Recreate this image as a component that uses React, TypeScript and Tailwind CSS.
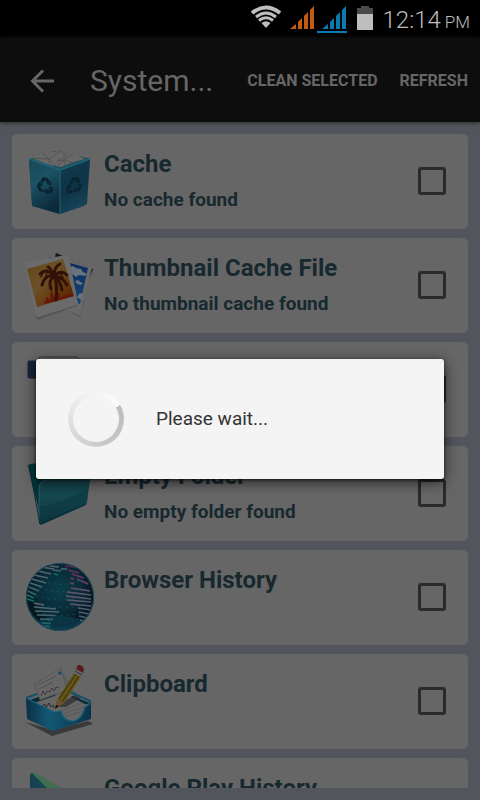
import type { ReactNode } from "react";

const TrashIcon = () => (
  <svg viewBox="0 0 72 72" className="w-full h-full" aria-hidden="true">
    <defs>
      <linearGradient id="binLeft" x1="0" y1="0" x2="0.4" y2="1">
        <stop offset="0" stopColor="#174754" />
        <stop offset="0.45" stopColor="#1c5265" />
        <stop offset="1" stopColor="#0b2b3b" />
      </linearGradient>
      <linearGradient id="binRight" x1="0" y1="0" x2="0.3" y2="1">
        <stop offset="0" stopColor="#113d4c" />
        <stop offset="0.6" stopColor="#0e3346" />
        <stop offset="1" stopColor="#164458" />
      </linearGradient>
      <g id="recycle" fill="none" stroke="#0a2430" strokeWidth="3">
        <path d="M-3.5-2.5-1-6H2L4-2.5" />
        <path d="M5 .5 6.5 3 4.500 6H1" />
        <path d="M-2 6H-5L-6.500 3-4.500 0" />
        <path d="M5.500-5V-1.500L2-2M2 3.500-1 6 2 8M-7 0-4-1.500-2.500 2" strokeWidth="1.200" />
      </g>
    </defs>
    <path d="M5 14 36 25 66 14 63 59 36 69 8 61Z" fill="#153d4b" />
    <path d="M5 14 36 25V69L9 61Q8 60 8 58Z" fill="url(#binLeft)" />
    <path d="M36 25 66 14 62 57Q62 60 60 61L36 69Z" fill="url(#binRight)" />
    <path d="M5 14 30 6 66 13.500 36 25Z" fill="#1a5160" />
    <path d="M8 13 18 8 31 6.500 38 6 42 9 51 9 61 14 50 17 37 22 26 20 20 18Z" fill="#686868" />
    <path d="m18 8 7 6 12-8 4 5-8 5 8-1 9 3M25 14l8 8 7-8 10-5M40 14l1 7M8 13l17 1 1 6" fill="none" stroke="#4c4c4c" strokeWidth="0.700" />
    <path d="M5 14 36 25 66 14" fill="none" stroke="#206477" strokeWidth="1.500" />
    <path d="M36 25V69" stroke="#286273" />
    <use href="#recycle" transform="translate(21 40) skewY(14)" />
    <use href="#recycle" transform="translate(50 40) skewY(-14)" />
  </svg>
);

const PhotosIcon = () => (
  <svg viewBox="0 0 72 72" className="w-full h-full" aria-hidden="true">
    <defs>
      <linearGradient id="sunset" x1="0" y1="0" x2="1" y2="1">
        <stop offset="0" stopColor="#634217" />
        <stop offset="0.4" stopColor="#6b5229" />
        <stop offset="0.7" stopColor="#66350a" />
        <stop offset="1" stopColor="#501b04" />
      </linearGradient>
      <linearGradient id="sky" x1="0" y1="0" x2="0" y2="1">
        <stop offset="0" stopColor="#0a285e" />
        <stop offset="1" stopColor="#1a4671" />
      </linearGradient>
    </defs>
    <path d="M10 66 14 71 42 61 56 68 61 50Z" fill="#000" opacity="0.150" />
    <path d="M31 3 70 20 60 47 30 40Z" fill="#626262" />
    <path d="m32 4 9 4-1 3-9-3ZM66 19l3 1-5 12Z" fill="#151515" />
    <path d="M24 6 68 19 56 66 38 60Z" fill="#6a6a6a" />
    <path d="m25 8 39 11-8 36-24-6Z" fill="url(#sky)" />
    <g fill="#67737d">
      <path d="m46 18 3-1 3 2 5 1 2 3 4 2-2 2-6-1-3 2-4-3-4-2Z" />
      <path d="m51 32 3-1 2 2 3 1-2 2-4-1Z" />
      <path d="m53 48 3-4 3 1-2 6Z" />
    </g>
    <path d="M1 16Q1 14 3 13L42 6Q44 6 45 8L54 54Q54 56 52 57L15 69Q13 69 12 67Z" fill="#6b6b6b" />
    <path d="m13 69 40-12.500" stroke="#505050" />
    <path d="M3 20 39 10 50 47 13 58Z" fill="url(#sunset)" />
    <path d="m20 55 3-7 3 3 1-10 4 8 4-6 2 6 4-3 6-1 3 2Z" fill="#681608" />
    <g fill="none" stroke="#321107" strokeWidth="3" strokeLinecap="round">
      <path d="M30 27Q34 35 32 51M30 27Q22 18 16 25M30 27Q21 25 18 36M30 27Q24 31 27 40M30 27Q30 18 36 15M30 27Q37 20 43 26M30 27Q39 28 43 36M30 27Q35 29 38 41M30 27Q26 18 24 18" />
      <path d="m19 24-2 4m6-5-1 4m14-3 3 5m-19 2-2 5m18-3 2 4" strokeWidth="1.500" />
    </g>
  </svg>
);

const DevicesIcon = () => (
  <svg viewBox="0 0 72 72" className="w-full h-full" aria-hidden="true">
    <rect x="4" y="8" width="16" height="17" rx="1" fill="#17253a" stroke="#1b2738" />
    <path d="M15 30V4H52Q55 4 55 7V30" fill="#686868" stroke="#393939" />
  </svg>
);

const FolderIcon = () => (
  <svg viewBox="0 0 72 72" className="w-full h-full" aria-hidden="true">
    <defs>
      <linearGradient id="folderFront" x1="0" y1="0" x2="0" y2="1">
        <stop offset="0" stopColor="#124247" />
        <stop offset="0.450" stopColor="#154850" />
        <stop offset="1" stopColor="#0d333f" />
      </linearGradient>
      <linearGradient id="folderBack" x1="0" y1="0" x2="0" y2="1">
        <stop offset="0" stopColor="#003d3e" />
        <stop offset="1" stopColor="#062730" />
      </linearGradient>
    </defs>
    <path d="M4 9Q4 7 7 7L32 3 66 8 63 46 18 66Z" fill="url(#folderBack)" />
    <path d="M15 31Q15 25 21 23L67 17 63 44Q63 47 60 49L17 68 15 66Z" fill="url(#folderFront)" />
    <path d="M15 64V31Q15 25 22 23L67 17" fill="none" stroke="#295d64" />
    <path d="M15 50Q40 45 64 32L62 46 17 67Z" fill="#0c3540" opacity="0.500" />
    <path d="m5 9 11 58 46-20" fill="none" stroke="#092a33" />
  </svg>
);

const GlobeIcon = () => (
  <svg viewBox="0 0 72 72" className="w-full h-full" aria-hidden="true">
    <defs>
      <radialGradient id="ocean" cx="0.5" cy="0.4" r="0.6">
        <stop offset="0" stopColor="#0b3e4c" />
        <stop offset="0.550" stopColor="#092b37" />
        <stop offset="0.850" stopColor="#05151d" />
        <stop offset="1" stopColor="#10384a" />
      </radialGradient>
      <linearGradient id="landLeft" x1="0" y1="0" x2="0" y2="1">
        <stop offset="0" stopColor="#586573" />
        <stop offset="0.650" stopColor="#426570" />
        <stop offset="1" stopColor="#087064" />
      </linearGradient>
      <linearGradient id="landRight" x1="0" y1="0" x2="0" y2="1">
        <stop offset="0" stopColor="#66205a" />
        <stop offset="0.450" stopColor="#68526b" />
        <stop offset="1" stopColor="#486071" />
      </linearGradient>
      <clipPath id="globeClip">
        <circle cx="36" cy="36" r="33.500" />
      </clipPath>
    </defs>
    <circle cx="36" cy="36" r="34" fill="url(#ocean)" />
    <g clipPath="url(#globeClip)" fill="none">
      <path d="M18 20Q36 27 55 20M15 27Q36 34 57 27M12 35Q36 42 60 35M12 43Q36 50 61 43M13 51Q36 58 60 51M18 58Q36 65 55 58" stroke="#174956" strokeWidth="1.200" strokeDasharray="2 4" />
      <ellipse cx="36" cy="62" rx="22" ry="7" fill="#0f4358" opacity="0.600" />
      <g stroke="url(#landLeft)" strokeWidth="1.700">
        <path d="M17 6 30 8M14 10 27 13M10 14 24 17M8 18 22 22M6 22 18 26M5 26 15 30M4 30 12 34M3 34 10 37M3 38 10 40" />
        <path d="M10 42 20 44M10 46 32 48M11 50 35 51M13 54 31 54.500M16 58 29 58.500M18 62 27 62.500M21 65 26 65.500" />
        <path d="M26 5 35 6M29 9 37 10M30 13 34 14M37 8 43 8" />
      </g>
      <g stroke="url(#landRight)" strokeWidth="1.700">
        <path d="M41 5 51 6M44 9 55 12M48 13 60 17M46 17 50 18M53 18 64 23M46 22 50 23M47 27 66 30M43 31 67 34M42 35 67 38M43 39 67 41M46 43 67 45M54 47 67 49M55 51 65 53M55 55 63 57M56 59 60 60" />
      </g>
    </g>
    <circle cx="36" cy="36" r="33.500" fill="none" stroke="#1b485b" />
  </svg>
);

const ClipboardIcon = () => (
  <svg viewBox="0 0 72 72" className="w-full h-full" aria-hidden="true">
    <defs>
      <linearGradient id="trayFront" x1="0" y1="0" x2="1" y2="0">
        <stop offset="0" stopColor="#0b3045" />
        <stop offset="0.350" stopColor="#135873" />
        <stop offset="1" stopColor="#0a3348" />
      </linearGradient>
    </defs>
    <path d="M1 57 28 71 69 59 64 56 29 65Z" fill="#262626" opacity="0.700" />
    <path d="M3 36 33 25 66 38 29 52Z" fill="#0b2a3a" />
    <path d="m38 8 13 20-12 12-8-8Z" fill="#636363" stroke="#505050" strokeWidth="0.700" />
    <path d="M11 19 37 3 43 25 16 35Z" fill="#676767" stroke="#505050" strokeWidth="0.700" />
    <circle cx="36" cy="8" r="1.800" fill="#124b70" />
    <path d="m14 20 18-9M15 24l14-7" fill="none" stroke="#4a4a4a" strokeWidth="0.800" />
    <path d="m17 31 2-5 2 4 2-4 3 1 2-4 2 3 2-4 3 1" fill="none" stroke="#3c3c3c" />
    <path d="m7 39 32-11 24 12-9 17H42L30 48Z" fill="#666" />
    <path d="m18 41 3-2 1 4 3-5 2 4 2-2 1 3" fill="none" stroke="#2a2a2a" />
    <path d="m31 42 20-12 6 3-15 9Z" fill="#272727" opacity="0.650" />
    <path d="m37 46 21-8M38 49l23-7M40 52l20-6" fill="none" stroke="#505050" strokeWidth="0.700" />
    <path d="M2 33 30 47 37 46Q40 57 50 56 58 54 61 42L67 38V54L29 66 3 54Z" fill="url(#trayFront)" />
    <path d="m2 33 28 14 7-1Q40 57 50 56 58 54 61 42l6-4" fill="none" stroke="#1c617a" strokeWidth="1.200" />
    <path d="m2 33 11-4m31-3 22 10v3" fill="none" stroke="#155169" strokeWidth="2" />
    <path d="m31 44 2-9L50 8l7 4-17 26Z" fill="#665615" />
    <path d="m35 34 17-25m-14 28L55 11" stroke="#3e3510" strokeWidth="1.200" />
    <path d="m31 44 2-9 7 3Z" fill="#665139" />
    <path d="m31 44 1-4 3 1Z" fill="#111" />
    <path d="m50 8 2-4 7 4-2 4Z" fill="#666" />
    <path d="m51 6 7 4" stroke="#333" />
    <path d="m52 4 2-4q4-1 6 4l-1 4Z" fill="#571b20" />
  </svg>
);

const PlayIcon = () => (
  <svg viewBox="0 0 72 72" className="w-full h-full" aria-hidden="true">
    <defs>
      <linearGradient id="playLeft" x1="0" y1="0" x2="1" y2="0">
        <stop offset="0" stopColor="#173e51" />
        <stop offset="1" stopColor="#14525a" />
      </linearGradient>
    </defs>
    <path d="M6 6V63L36 33 10 4Q7 3 6 6Z" fill="url(#playLeft)" />
    <path d="M8 4Q10 3 13 5L49 25 37 33Z" fill="#426e50" />
  </svg>
);

const items: { id: string; title?: string; note?: string; icon: ReactNode }[] = [
  { id: "cache", title: "Cache", note: "No cache found", icon: <TrashIcon /> },
  {
    id: "thumbnails",
    title: "Thumbnail Cache File",
    note: "No thumbnail cache found",
    icon: <PhotosIcon />,
  },
  { id: "devices", icon: <DevicesIcon /> },
  { id: "folders", title: "Empty Folder", note: "No empty folder found", icon: <FolderIcon /> },
  { id: "browser", title: "Browser History", icon: <GlobeIcon /> },
  { id: "clipboard", title: "Clipboard", icon: <ClipboardIcon /> },
  { id: "play", title: "Google Play History", icon: <PlayIcon /> },
];

const StatusBar = () => (
  <div className="h-[38px] shrink-0 bg-black flex items-center justify-end pr-[10px] text-[#bebebe]">
    <svg viewBox="0 0 136 38" className="w-[136px] h-[38px]" aria-hidden="true">
      {/* Wifi */}
      <g fill="none" stroke="#bebebe" strokeWidth="3">
        <path d="M5 13Q19 2 33 13" strokeWidth="4" />
        <path d="M9 17Q19 9 29 17M12 20.500Q19 15 26 20.500" />
        <path d="m19 28-4.500-5Q19 19.500 23.500 23Z" fill="#bebebe" stroke="none" />
      </g>
      {/* Signal, one per SIM */}
      <path d="M43 29 49 24V29ZM51 22 55 18V29H51ZM57 16 61 12V29H57ZM63 10 67 6V29H63Z" fill="#c65a10" />
      <path d="M75 29 81 24V29ZM83 22 87 18V29H83ZM89 16 93 12V29H89ZM95 10 99 6V29H95ZM70 31H100V33H70Z" fill="#087bb2" />
      {/* Battery */}
      <path d="M110 14V8H114V6H122V8H126V14Z" fill="#4a4a4a" />
      <path d="M110 14H126V30H110Z" fill="#bebebe" />
    </svg>
    <span className="text-[24px] leading-[38px] pt-[2px] font-light">12:14</span>
    <span className="ml-1 text-[17px] leading-[38px] pt-[6px] font-light">PM</span>
  </div>
);

const Header = () => (
  <header className="h-[84px] shrink-0 bg-[#0d0d0d] flex items-center pt-[2px] pl-[30px] pr-3 text-[#666] shadow-[0_1px_4px_#2c2e32]">
    <button aria-label="Back" className="shrink-0">
      <svg viewBox="0 0 24 24" className="w-6 h-6" fill="none" stroke="currentColor" strokeWidth="3" aria-hidden="true">
        <path d="M24 12H2.500M13 1.500 2.500 12 13 22.500" />
      </svg>
    </button>
    <h1 className="ml-9 flex-1 text-[30px] leading-9 whitespace-nowrap">System...</h1>
    <button className="text-base font-bold whitespace-nowrap">CLEAN SELECTED</button>
    <button className="ml-[22px] text-base font-bold whitespace-nowrap">REFRESH</button>
  </header>
);

const WaitDialog = () => (
  <div className="absolute inset-0 pt-[38px] px-9 flex items-center">
    <div
      role="dialog"
      aria-label="Please wait"
      className="w-full h-[120px] rounded-[3px] bg-[#f4f4f4] flex items-center pl-8 shadow-[0_3px_14px_#000a,0_1px_3px_#0009]"
    >
      <div className="w-14 h-14 rounded-full p-[5px] bg-[conic-gradient(from_60deg,#bdbdbd,#c6c6c6_25%,#dadada_50%,#f0f0f0_75%,#fcfcfc)]">
        <div className="w-full h-full rounded-full bg-[#f4f4f4]" />
      </div>
      <p className="ml-8 text-[19px] text-[#333]">Please wait...</p>
    </div>
  </div>
);

export default function App() {
  return (
    <div className="relative h-screen overflow-hidden flex flex-col bg-[#52555b] font-['Roboto',sans-serif]">
      <StatusBar />
      <Header />
      <main className="flex-1 min-h-0 overflow-hidden pt-3 mb-3">
        <ul className="flex flex-col gap-[9px] px-3">
          {items.map((item) => (
            <li key={item.id}>
              <label className="h-[95px] rounded-[5px] bg-[#666] flex items-center pb-[2px] pl-3 pr-[22px] text-[#17292f]">
                <span className="w-[72px] h-[72px] shrink-0">{item.icon}</span>
                <span className="ml-2 flex-1 self-start pt-[14px] font-bold whitespace-nowrap">
                  <span className="block text-[24px] leading-8">{item.title}</span>
                  <span className="block mt-[6px] text-[19px] leading-7">{item.note}</span>
                </span>
                <input
                  type="checkbox"
                  aria-label={item.title ?? "Select"}
                  className="appearance-none w-7 h-7 border-3 border-[#2a2a2a] rounded-[3px]"
                />
              </label>
            </li>
          ))}
        </ul>
      </main>
      <WaitDialog />
    </div>
  );
}
